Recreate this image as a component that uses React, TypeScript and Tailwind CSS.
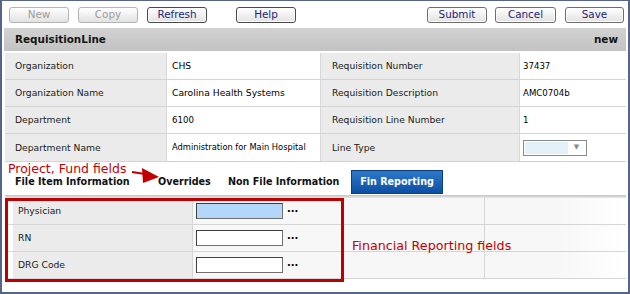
import React from "react";

const font = "font-['DejaVu_Sans',sans-serif]";

function Btn({ label, disabled, dark, w = "w-[60px]" }: { label: string; disabled?: boolean; dark?: boolean; w?: string }) {
  return (
    <div
      className={`${w} h-[16px] rounded-[3px] border flex items-center justify-center text-[10.4px] leading-none bg-gradient-to-b from-white to-[#e2e2e2] ${
        disabled
          ? "border-[#b4b4b4] text-[#9c9c9c]"
          : dark
          ? "border-[#4a4a4a] text-[#1b2477] shadow-[inset_0_0_0_1px_#ffffff]"
          : "border-[#6e6e6e] text-[#1b2477] shadow-[inset_0_0_0_1px_#ffffff]"
      }`}
    >
      {label}
    </div>
  );
}

function InfoRow({ l1, v1, l2, v2, h = "h-[27px]", small }: { l1: string; v1: React.ReactNode; l2: string; v2: React.ReactNode; h?: string; small?: boolean }) {
  return (
    <div className={`flex ${h} border-b border-[#d3d3d3]`}>
      <div className="w-[162px] bg-[#ebebeb] pl-[10px] flex items-center border-r border-[#d8d8d8] text-[#1a1a1a]">{l1}</div>
      <div className={`w-[153px] bg-white pl-[5px] flex items-center text-black ${small ? "text-[8.3px]" : ""}`}>{v1}</div>
      <div className="w-[200px] bg-[#ebebeb] pl-[11px] flex items-center border-l border-r border-[#d8d8d8] text-[#1a1a1a]">{l2}</div>
      <div className="flex-1 bg-white pl-[3px] flex items-center text-black text-[8.6px]">{v2}</div>
    </div>
  );
}

function FieldRow({ label, active }: { label: string; active?: boolean }) {
  return (
    <div className="flex h-[27px] border-b border-[#d6d6d6]">
      <div className="w-[8px] bg-white" />
      <div className="w-[180px] bg-[#ebebeb] pl-[5px] flex items-center border-r border-[#d6d6d6] text-[#1a1a1a]">{label}</div>
      <div className="w-[292px] bg-[#f7f7f7] pl-[3px] flex items-center border-r border-[#d6d6d6]">
        <div
          className={`w-[87px] h-[16px] border border-[#707070] border-t-[#404040] border-l-[#404040] ${
            active ? "bg-[#b3d7fb]" : "bg-white"
          }`}
        />
        <div className="ml-[4px] text-[10px] font-bold leading-none mt-[-4px] text-black">...</div>
      </div>
      <div className="flex-1 bg-gradient-to-r from-[#f7f7f7] via-[#f7f7f7] to-white" />
    </div>
  );
}

export default function App() {
  return (
    <div className={`${font} w-[630px] h-[294px] bg-white border-l-2 border-r-2 border-t border-b-2 border-[#56648a] relative overflow-hidden text-[9.2px]`}>
      {/* toolbar */}
      <div className="h-[27px] flex items-center justify-between pl-[7px] pr-[4px]">
        <div className="flex items-center">
          <Btn label="New" disabled />
          <div className="w-[9px]" />
          <Btn label="Copy" disabled />
          <div className="w-[9px]" />
          <Btn label="Refresh" dark />
          <div className="w-[29px]" />
          <Btn label="Help" dark />
        </div>
        <div className="flex items-center">
          <Btn label="Submit" />
          <div className="w-[8px]" />
          <Btn label="Cancel" w="w-[61px]" />
          <div className="w-[9px]" />
          <Btn label="Save" w="w-[59px]" />
        </div>
      </div>

      <div className="px-[2px]">
        {/* header bar */}
        <div className="h-[23px] bg-gradient-to-b from-[#d2d2d2] to-[#c3c3c3] flex items-center justify-between pl-[11px] pr-[8px] text-[10.4px] font-bold text-[#141414]">
          <span>RequisitionLine</span>
          <span>new</span>
        </div>
        <div className="h-[2px]" />

        {/* info table */}
        <div className="ml-[1px]">
          <InfoRow l1="Organization" v1="CHS" l2="Requisition Number" v2="37437" />
          <InfoRow l1="Organization Name" v1="Carolina Health Systems" l2="Requisition Description" v2="AMC0704b" />
          <InfoRow l1="Department" v1={<span className="text-[8.6px]">6100</span>} l2="Requisition Line Number" v2="1" />
          <InfoRow
            l1="Department Name"
            v1="Administration for Main Hospital"
            small
            h="h-[28px]"
            l2="Line Type"
            v2={
              <div className="w-[64px] h-[16px] border border-[#8a8a8a] bg-white flex items-center p-[1px]">
                <div className="w-[43px] h-full bg-[#e3f2f8]" />
                <div className="flex-1 flex justify-center text-[#8a8a8a] text-[7px] leading-none">▼</div>
              </div>
            }
          />
        </div>

        {/* tabs */}
        <div className="ml-[1px] h-[33px] flex items-end pb-[1px] text-[9.6px] font-bold text-[#111]">
          <div className="w-[145px] h-[24px] pl-[10px] flex items-center">File Item Information</div>
          <div className="w-[70px] h-[24px] pl-[8px] flex items-center">Overrides</div>
          <div className="w-[131px] h-[24px] pl-[8px] flex items-center">Non File Information</div>
          <div className="w-[92px] h-[24px] flex items-center justify-center text-white bg-gradient-to-b from-[#2f78c9] to-[#0b4fa3] border border-[#0a3f85]">
            Fin Reporting
          </div>
        </div>
        <div className="ml-[1px] h-[3px] bg-gradient-to-b from-[#c4c4c4] to-[#e8e8e8]" />

        {/* fields */}
        <div className="ml-[1px]">
          <FieldRow label="Physician" active />
          <FieldRow label="RN" />
          <FieldRow label="DRG Code" />
        </div>
      </div>

      {/* annotations */}
      <div className="absolute left-[6px] top-[161px] text-[12.5px] leading-[14px] text-[#c40000] bg-white pr-[2px]">Project, Fund fields</div>
      <svg className="absolute left-[128px] top-[164px]" width="32" height="22" viewBox="0 0 32 22">
        <path d="M2 7 L15 9" stroke="#c00000" strokeWidth="2.2" fill="none" />
        <polygon points="12,3 29,12 13,18" fill="#c00000" />
      </svg>
      <div className="absolute left-[350px] top-[238px] text-[12.7px] leading-[14px] text-[#c40000]">Financial Reporting fields</div>
      <div className="absolute left-[3px] top-[197px] w-[339px] h-[84px] border-[3px] border-[#bf0000]" />
    </div>
  );
}
